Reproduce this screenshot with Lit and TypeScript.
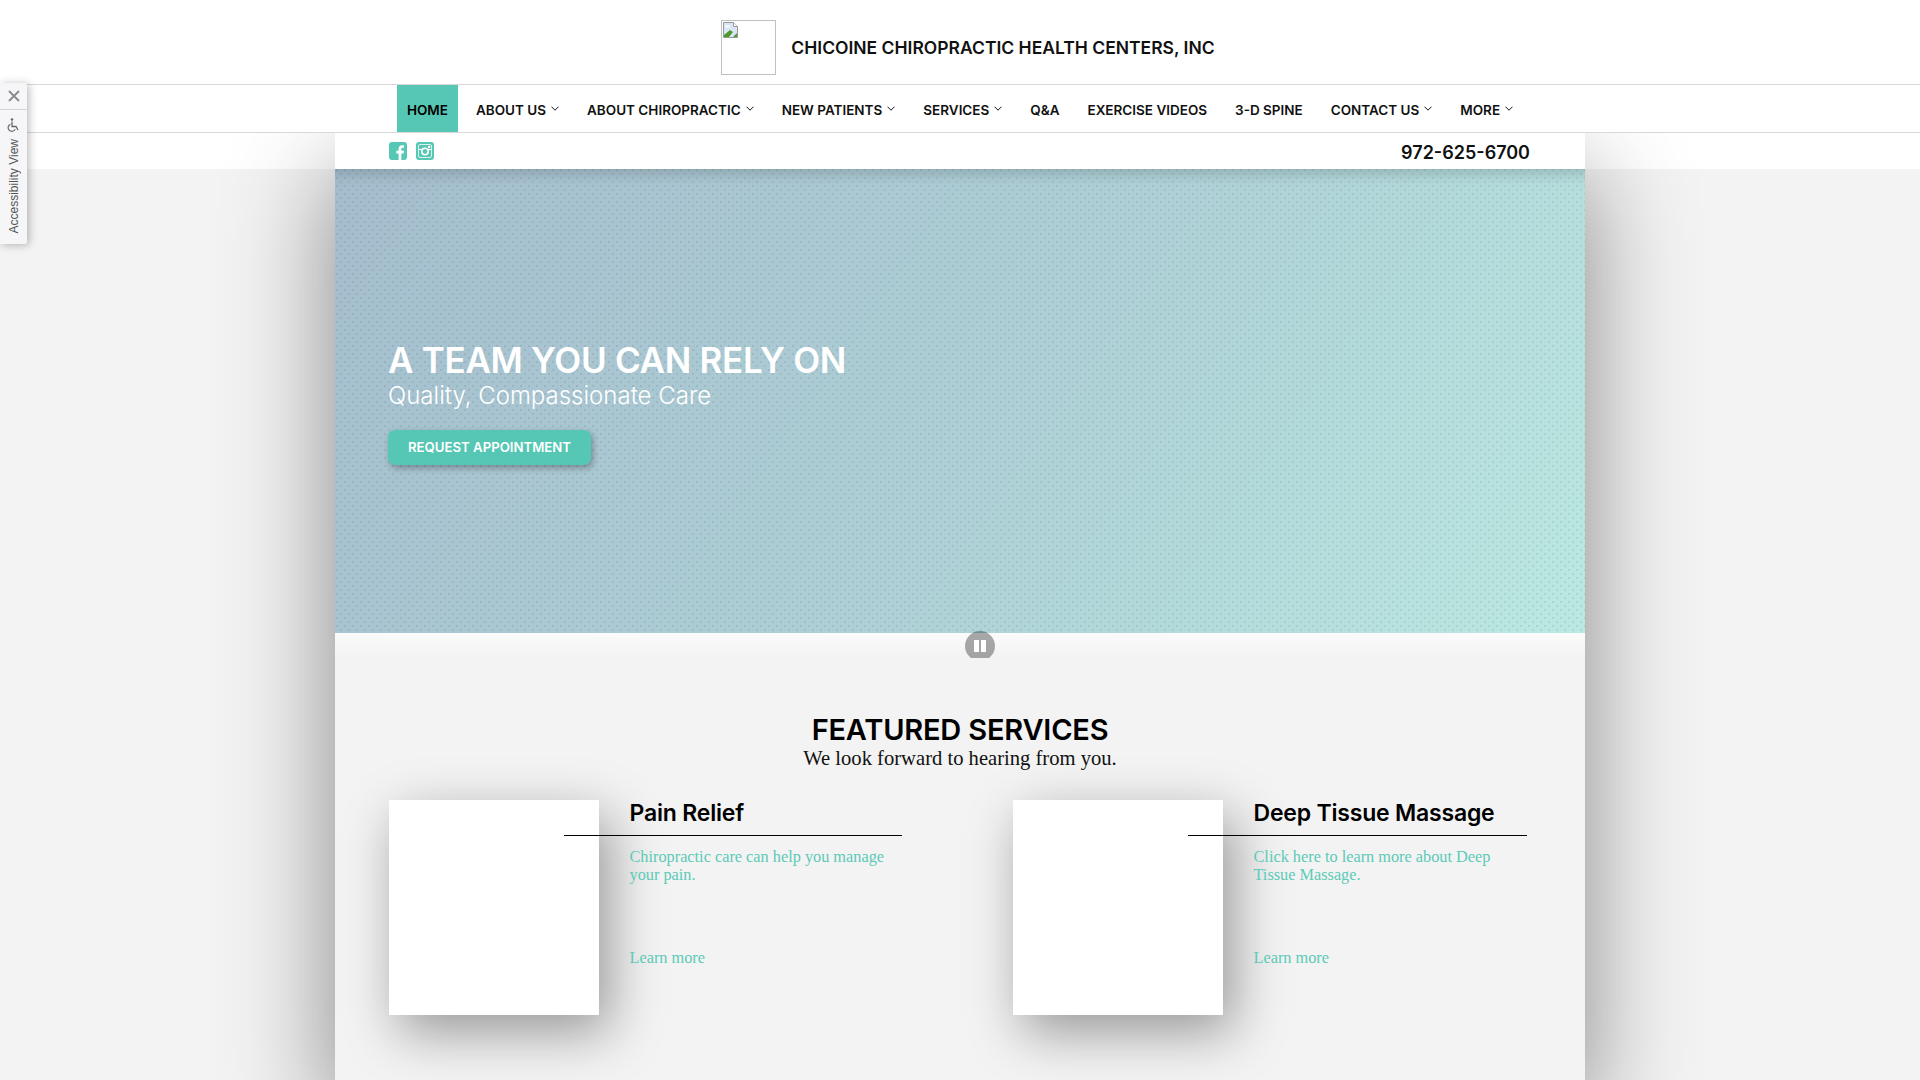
import { LitElement, html, css, svg } from "lit";
import { customElement } from "lit/decorators.js";

const NAV = [
  { label: "HOME", active: true },
  { label: "ABOUT US", menu: true },
  { label: "ABOUT CHIROPRACTIC", menu: true },
  { label: "NEW PATIENTS", menu: true },
  { label: "SERVICES", menu: true },
  { label: "Q&A" },
  { label: "EXERCISE VIDEOS" },
  { label: "3-D SPINE" },
  { label: "CONTACT US", menu: true },
  { label: "MORE", menu: true },
];

const SERVICES = [
  { title: "Pain Relief", text: "Chiropractic care can help you manage your pain." },
  { title: "Deep Tissue Massage", text: "Click here to learn more about Deep Tissue Massage." },
];

const chevron = svg`<svg class="chev" width="8" height="5" viewBox="0 0 8 5"><path d="M.5.7 4 4.2 7.500.7" fill="none" stroke="#111" stroke-width="1"/></svg>`;

@customElement("app-root")
export class AppRoot extends LitElement {
  static styles = css`
    :host {
      display: block;
      font-family: Inter, "Liberation Sans", sans-serif;
      color: #000;
    }
    .page {
      position: relative;
      min-height: 1080px;
      display: flex;
      flex-direction: column;
      background: linear-gradient(#fff 169px, #f3f3f3 169px);
      overflow: hidden;
    }
    .top {
      position: relative;
      z-index: 2;
      background: #fff;
    }
    .brand {
      height: 85px;
      display: flex;
      align-items: center;
      justify-content: center;
      gap: 15px;
      padding-top: 11px;
      padding-left: 16px;
      box-sizing: border-box;
      border-bottom: 1px solid #d8d8d8;
    }
    .logo {
      width: 55px;
      height: 55px;
      box-sizing: border-box;
      border: 1px solid #c0c0c0;
    }
    .logo svg {
      display: block;
    }
    .brand-name {
      font-size: 17.5px;
      font-weight: 600;
      color: #111;
    }
    .nav {
      height: 48px;
      box-sizing: border-box;
      display: flex;
      justify-content: center;
      gap: 8px;
      border-bottom: 1px solid #d8d8d8;
    }
    .nav a {
      display: flex;
      align-items: center;
      gap: 5px;
      padding: 3px 10px 0;
      font-size: 13.5px;
      font-weight: 600;
      color: #111;
    }
    .nav a.active {
      background: #56c7b4;
      color: #000;
    }
    .chev {
      margin-top: -4px;
    }
    .shell {
      flex: 1;
      width: 1250px;
      margin: 0 auto;
      background: #f3f3f3;
      box-shadow: 0 40px 100px rgba(0, 0, 0, 0.45);
      position: relative;
      z-index: 1;
    }
    .utility {
      height: 36px;
      background: #fff;
      display: flex;
      align-items: center;
      justify-content: space-between;
      padding: 0 55px 0 54px;
      box-sizing: border-box;
    }
    .social {
      display: flex;
      gap: 9px;
    }
    .social svg {
      display: block;
    }
    .phone {
      margin-top: 2px;
      font-size: 18px;
      font-weight: 600;
      color: #111;
    }
    .hero {
      height: 464px;
      box-sizing: border-box;
      padding: 170px 0 0 53px;
      color: #fff;
      box-shadow: inset 0 16px 14px -12px rgba(0, 0, 0, 0.18);
      background-color: #aecdd3;
      background-image: url("data:image/svg+xml;utf8,<svg xmlns='http://www.w3.org/2000/svg' width='8' height='8'><rect x='0' y='0' width='2' height='2' fill='%23000' fill-opacity='.08'/><rect x='4' y='4' width='2' height='2' fill='%23000' fill-opacity='.08'/></svg>"),
        linear-gradient(125deg, #a4bdcd 0%, #aed0d6 55%, #bae9e2 100%);
      background-position: 1px 0, 0 0;
    }
    .hero h1 {
      margin: 0;
      font-size: 35px;
      line-height: 42px;
      font-weight: 600;
      letter-spacing: -0.3px;
    }
    .hero p {
      margin: 0;
      font-size: 24px;
      line-height: 30px;
      font-weight: 300;
    }
    .cta {
      display: inline-block;
      margin-top: 19px;
      height: 35px;
      line-height: 35px;
      padding: 0 20px;
      border-radius: 7px;
      background: #56c7b4;
      font-size: 13.2px;
      font-weight: 600;
      color: #fff;
      box-shadow: 2px 3px 6px rgba(0, 0, 0, 0.3);
    }
    .fade {
      position: relative;
      height: 25px;
      background: linear-gradient(#fbfbfb, #f3f3f3);
    }
    .pause-clip {
      position: absolute;
      left: 630px;
      top: -2px;
      width: 30px;
      height: 27px;
      overflow: hidden;
    }
    .pause {
      width: 30px;
      height: 30px;
      border-radius: 50%;
      background: rgba(0, 0, 0, 0.33);
      display: flex;
      justify-content: center;
      align-items: center;
      gap: 2px;
    }
    .pause i {
      width: 5px;
      height: 12px;
      background: #fff;
    }
    .services {
      padding-top: 53px;
    }
    .services h2 {
      margin: 0;
      text-align: center;
      font-size: 29px;
      line-height: 37px;
      font-weight: 600;
      letter-spacing: -0.2px;
      color: #000;
    }
    .lead {
      margin: -2px 0 0;
      text-align: center;
      font-family: "Liberation Serif", serif;
      font-size: 20.6px;
      line-height: 24px;
      color: #111;
    }
    .cards {
      display: grid;
      grid-template-columns: 513px 514px;
      column-gap: 111px;
      margin-top: 30px;
      padding: 0 58px 0 54px;
    }
    .card {
      display: flex;
      align-items: flex-start;
    }
    .pic {
      flex: none;
      width: 210px;
      height: 215px;
      background: #fff;
      box-shadow: 10px 17px 50px rgba(0, 0, 0, 0.38);
    }
    .info {
      flex: 1;
      margin-left: -35px;
      position: relative;
    }
    .info h3 {
      margin: 0;
      height: 36px;
      box-sizing: border-box;
      padding-left: 65.5px;
      border-bottom: 1px solid #000;
      font-size: 23px;
      line-height: 26px;
      font-weight: 600;
      letter-spacing: -0.2px;
      color: #000;
    }
    .info p,
    .info a {
      display: block;
      margin: 0 10px 0 65.5px;
      font-family: "Liberation Serif", serif;
      font-size: 16.3px;
      line-height: 18px;
      color: #5ccab8;
    }
    .info p {
      margin-top: 12px;
      height: 36px;
    }
    .info a {
      margin-top: 65px;
    }
    .access {
      position: absolute;
      z-index: 3;
      left: 0;
      top: 83px;
      width: 27px;
      height: 161px;
      box-sizing: border-box;
      background: rgba(245, 245, 249, 0.94);
      border-radius: 0 3px 3px 0;
      box-shadow: 2px 1px 8px rgba(0, 0, 0, 0.28);
      display: flex;
      flex-direction: column;
      align-items: center;
    }
    .access .close {
      width: 100%;
      height: 26px;
      display: flex;
      align-items: center;
      justify-content: center;
      border-bottom: 1px solid #d5d5d8;
    }
    .access .chair {
      margin-top: 8px;
    }
    .access span {
      margin-top: 7px;
      writing-mode: vertical-rl;
      transform: rotate(180deg);
      font-family: "Liberation Sans", sans-serif;
      font-size: 12px;
      line-height: 14px;
      color: #555;
    }
  `;

  render() {
    return html`
      <div class="page">
        <header class="top">
          <div class="brand">
            <div class="logo">
              <svg width="18" height="18" viewBox="0 0 18 18">
                <path d="M1.500 1.500h10l4 4v11h-14z" fill="#d9e6f7" stroke="#9a9a9a"/>
                <path d="M11.500 1.500v4h4" fill="#fff" stroke="#9a9a9a"/>
                <path d="M2 16v-2l6-5 3 2-4 5z" fill="#4c9a2a"/>
                <path d="M3 4.500h5v2h-5z" fill="#fff" opacity=".8"/>
                <path d="M11 16l4-4v4z" fill="#4c9a2a"/>
              </svg>
            </div>
            <div class="brand-name">CHICOINE CHIROPRACTIC HEALTH CENTERS, INC</div>
          </div>
          <nav class="nav">
            ${NAV.map(
              (n) => html`<a class=${n.active ? "active" : ""}>${n.label}${n.menu ? chevron : ""}</a>`
            )}
          </nav>
        </header>

        <main class="shell">
          <div class="utility">
            <div class="social">
              <svg width="18" height="18" viewBox="0 0 18 18">
                <rect width="18" height="18" rx="3" fill="#56c7b4"/>
                <path d="M12.400 18v-6.600h2.200l.4-2.700h-2.600V7c0-.8.3-1.300 1.300-1.300H15V3.300c-.3 0-1.100-.1-2-.1-2 0-3.400 1.200-3.400 3.500v2H7.300v2.700h2.300V18z" fill="#fff"/>
              </svg>
              <svg width="18" height="18" viewBox="0 0 18 18">
                <rect width="18" height="18" rx="3" fill="#56c7b4"/>
                <rect x="2.500" y="2.500" width="13" height="13" rx="1.500" fill="none" stroke="#d8f3ee" stroke-width="1"/>
                <path d="M3 7.500h3M12 7.500h3" stroke="#fff" stroke-width="1"/>
                <circle cx="9" cy="9.500" r="3.200" fill="#56c7b4" stroke="#fff" stroke-width="1.600"/>
                <rect x="12" y="3.800" width="2.200" height="2.200" fill="#fff"/>
              </svg>
            </div>
            <div class="phone">972-625-6700</div>
          </div>

          <section class="hero">
            <h1>A TEAM YOU CAN RELY ON</h1>
            <p>Quality, Compassionate Care</p>
            <a class="cta">REQUEST APPOINTMENT</a>
          </section>

          <div class="fade">
            <div class="pause-clip">
              <div class="pause"><i></i><i></i></div>
            </div>
          </div>

          <section class="services">
            <h2>FEATURED SERVICES</h2>
            <p class="lead">We look forward to hearing from you.</p>
            <div class="cards">
              ${SERVICES.map(
                (s) => html`
                  <article class="card">
                    <div class="pic"></div>
                    <div class="info">
                      <h3>${s.title}</h3>
                      <p>${s.text}</p>
                      <a>Learn more</a>
                    </div>
                  </article>
                `
              )}
            </div>
          </section>
        </main>

        <aside class="access">
          <div class="close">
            <svg width="12" height="12" viewBox="0 0 12 12"><path d="M1 1l10 10M11 1 1 11" stroke="#8a8a8a" stroke-width="1.800"/></svg>
          </div>
          <svg class="chair" width="13" height="14" viewBox="0 0 13 14">
            <circle cx="5" cy="1.500" r="1.300" fill="#666"/>
            <path d="M5 3.500v5h4l2 3.500" fill="none" stroke="#666" stroke-width="1.300"/>
            <path d="M3.400 6.200a3.700 3.700 0 1 0 4.800 5" fill="none" stroke="#666" stroke-width="1.200"/>
          </svg>
          <span>Accessibility View</span>
        </aside>
      </div>
    `;
  }
}
